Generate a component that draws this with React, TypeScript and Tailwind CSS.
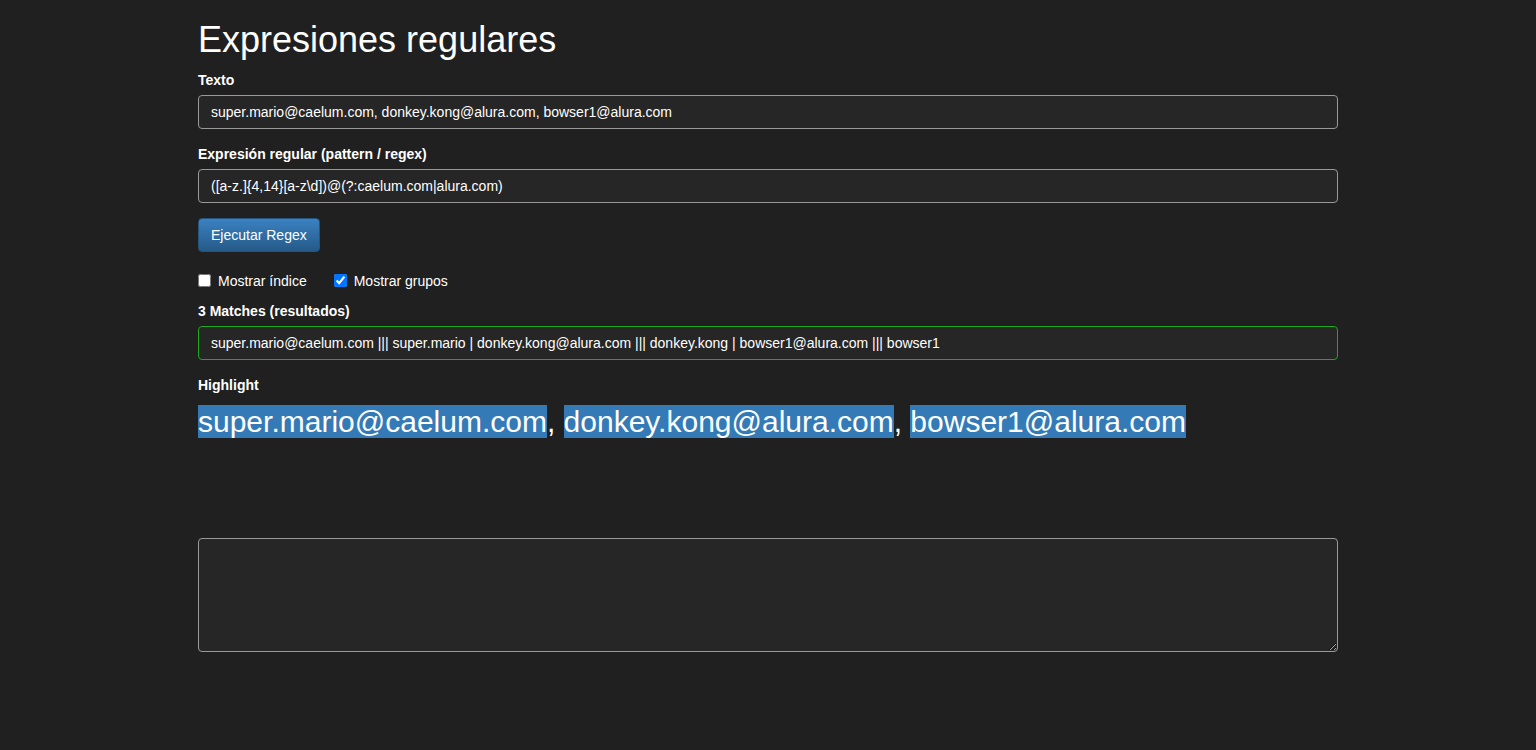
import React, { useState } from 'react';

const inputCls =
  'block w-full h-[34px] px-[12px] py-[6px] text-[14px] leading-[20px] text-white bg-[#262626] border border-[#999999] rounded-[4px] outline-none';

const Label = ({ children }: { children: React.ReactNode }) => (
  <label className="block w-fit mb-[5px] text-[14px] leading-[20px] font-bold text-white">{children}</label>
);

export default function App() {
  const [texto, setTexto] = useState('super.mario@caelum.com, donkey.kong@alura.com, bowser1@alura.com');
  const [regex, setRegex] = useState('([a-z.]{4,14}[a-z\\d])@(?:caelum.com|alura.com)');
  const [indice, setIndice] = useState(false);
  const [grupos, setGrupos] = useState(true);

  const matches = ['super.mario@caelum.com', 'donkey.kong@alura.com', 'bowser1@alura.com'];

  return (
    <div className="min-h-[750px] bg-[#202020] text-white text-[14px] leading-[20px] font-['Liberation_Sans',Arial,sans-serif] pt-[20px]">
      <div className="w-[1140px] mx-auto pb-[20px]">
        <h1 className="mb-[10px] text-[36px] leading-[1.1] font-normal">Expresiones regulares</h1>

        <div className="mb-[15px]">
          <Label>Texto</Label>
          <input className={inputCls} value={texto} onChange={e => setTexto(e.target.value)} />
        </div>

        <div className="mb-[15px]">
          <Label>Expresión regular (pattern / regex)</Label>
          <input className={inputCls} value={regex} onChange={e => setRegex(e.target.value)} />
        </div>

        <button className="block h-[34px] px-[12px] py-[6px] text-[14px] leading-[20px] text-white rounded-[4px] border border-[#245580] bg-gradient-to-b from-[#3a82c2] to-[#255a88]">
          Ejecutar Regex
        </button>

        <div className="mt-[19px] mb-[10px] flex items-center h-[20px] text-[14px]">
          <label className="flex items-center">
            <input type="checkbox" className="w-[13px] h-[13px] m-0 mr-[7px]" checked={indice} onChange={e => setIndice(e.target.checked)} />
            Mostrar índice
          </label>
          <label className="flex items-center ml-[27px]">
            <input type="checkbox" className="w-[13px] h-[13px] m-0 mr-[7px]" checked={grupos} onChange={e => setGrupos(e.target.checked)} />
            Mostrar grupos
          </label>
        </div>

        <div className="mb-[15px]">
          <Label>3 Matches (resultados)</Label>
          <input
            className="block w-full h-[34px] px-[12px] py-[6px] text-[14px] leading-[20px] text-white bg-[#262626] border border-[#1ea81e] rounded-[4px] outline-none"
            readOnly
            value="super.mario@caelum.com ||| super.mario | donkey.kong@alura.com ||| donkey.kong | bowser1@alura.com ||| bowser1"
          />
        </div>

        <div>
          <Label>Highlight</Label>
          <div className="text-[30px] leading-[43px] mb-[95px]">
            {matches.map((m, i) => (
              <React.Fragment key={m}>
                <span className="bg-[#337ab7]">{m}</span>
                {i < matches.length - 1 ? ', ' : ''}
              </React.Fragment>
            ))}
          </div>
        </div>

        <textarea
          rows={5}
          className="block w-full h-[114px] px-[12px] py-[6px] text-[14px] leading-[20px] text-white bg-[#262626] border border-[#999999] rounded-[4px] outline-none"
        />
      </div>
    </div>
  );
}
